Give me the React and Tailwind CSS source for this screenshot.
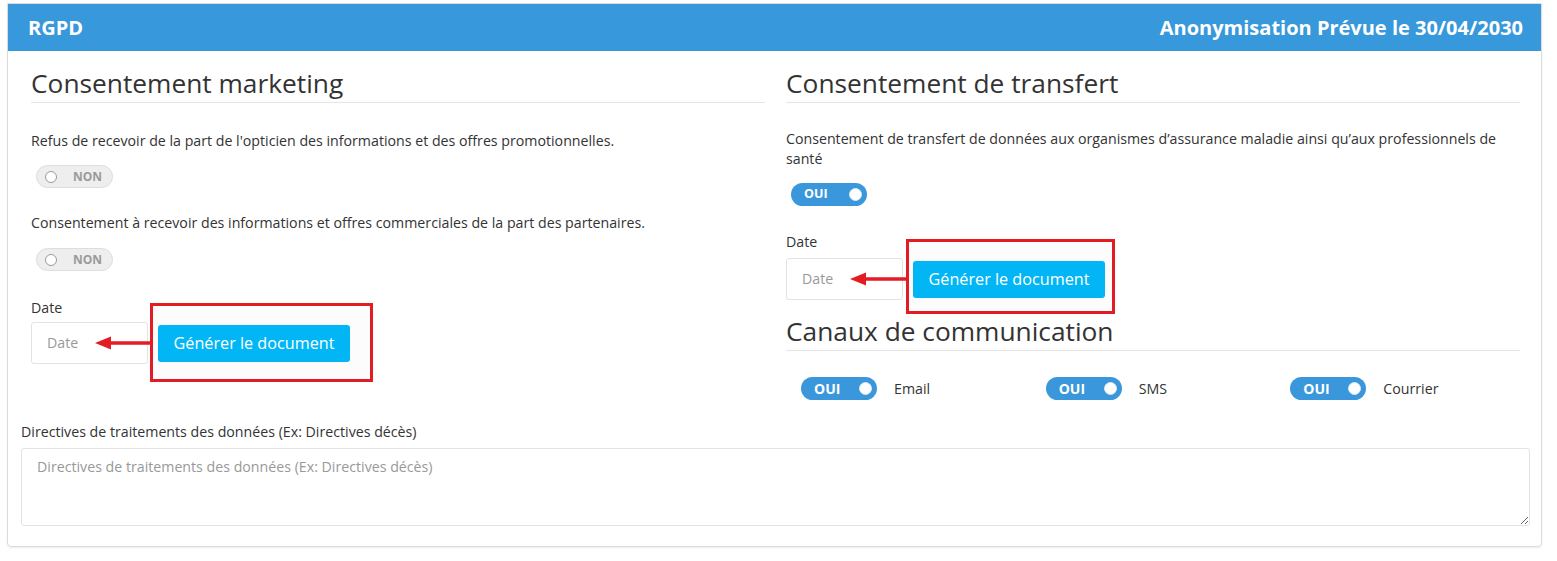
import React from 'react';

const font = { fontFamily: '"Open Sans", "Liberation Sans", sans-serif' };

function Toggle({ on, big }) {
  if (on) {
    return (
      <div className="flex h-[23px] w-[76px] shrink-0 items-center justify-between rounded-full bg-[#3a97db] pl-[13px] pr-[5px]">
        <span className={`${big ? 'text-[14px]' : 'text-[12.5px]'} font-bold leading-none text-white`}>OUI</span>
        <span className="h-[13px] w-[13px] rounded-full border border-[#d8e8f5] bg-white" />
      </div>
    );
  }
  return (
    <div className="flex h-[23px] w-[77px] shrink-0 items-center rounded-full border border-[#dddddd] bg-[#eeeeee] pl-[8px]">
      <span className="h-[12px] w-[12px] rounded-full border border-[#999999] bg-white" />
      <span className="ml-[16px] text-[12px] font-bold leading-none text-[#9a9a9a]">NON</span>
    </div>
  );
}

function Heading({ children, className = '' }) {
  return (
    <h2 className={`border-b border-[#e5e5e5] pb-[5px] text-[26.3px] font-normal leading-[28px] text-[#333] ${className}`}>
      {children}
    </h2>
  );
}

function LeftArrow() {
  return (
    <svg width="56" height="14" viewBox="0 0 56 14" className="pointer-events-none absolute">
      <line x1="12" y1="7" x2="56" y2="7" stroke="#e31b23" strokeWidth="3.5" />
      <polygon points="0,7 16,0.5 16,13.5" fill="#e31b23" />
    </svg>
  );
}

// date field + "Générer" button with its red highlight frame and pointer arrow
function DateRow({ box }) {
  return (
    <div className="relative flex items-center">
      <div className="flex h-[42px] w-[117px] items-center rounded-[3px] border border-[#e3e3e3] bg-white pl-[15px] text-[14.2px] text-[#999]">
        Date
      </div>
      <div className="absolute left-[64px] top-[14px]">
        <LeftArrow />
      </div>
      <div className="relative ml-[10px]">
        <div className={`absolute border-[3px] border-[#e31b23] bg-[#fcfcfc] ${box}`} />
        <button className="relative h-[37px] w-[192px] rounded-[3px] bg-[#02b6f6] text-[16.2px] text-white">
          Générer le document
        </button>
      </div>
    </div>
  );
}

function Channel({ label }) {
  return (
    <div className="flex items-center pl-[15px]">
      <Toggle on big />
      <span className="ml-[17px] text-[14.2px] text-[#333]">{label}</span>
    </div>
  );
}

export default function App() {
  return (
    <div className="min-h-[561px] bg-white pl-[7px] pr-[15px] pt-[3px]" style={font}>
      <div className="overflow-hidden rounded-b-[4px] border border-[#dcdcdc] shadow-[0_1px_2px_rgba(0,0,0,0.08)]">
        <div className="flex h-[47px] items-center justify-between bg-[#3798db] pl-[20px] pr-[18px] text-[20px] font-bold text-white">
          <span>RGPD</span>
          <span>Anonymisation Prévue le 30/04/2030</span>
        </div>

        <div className="flex gap-[21px] pl-[23px] pr-[21px] text-[14.2px] leading-[20px] text-[#333]">
          {/* Consentement marketing */}
          <div className="w-[734px]">
            <Heading className="mt-[18px]">Consentement marketing</Heading>
            <p className="mt-[28px]">
              Refus de recevoir de la part de l'opticien des informations et des offres promotionnelles.
            </p>
            <div className="mt-[14px] pl-[5px]">
              <Toggle />
            </div>
            <p className="mt-[25px]">
              Consentement à recevoir des informations et offres commerciales de la part des partenaires.
            </p>
            <div className="mt-[15px] pl-[5px]">
              <Toggle />
            </div>
            <p className="mt-[27px]">Date</p>
            <div className="mt-[4px]">
              <DateRow box="-left-[8px] -right-[23px] -top-[22px] -bottom-[20px]" />
            </div>
          </div>

          {/* Consentement de transfert + canaux */}
          <div className="w-[734px]">
            <Heading className="mt-[18px]">Consentement de transfert</Heading>
            <p className="mt-[26px]">
              Consentement de transfert de données aux organismes d’assurance maladie ainsi qu’aux professionnels de santé
            </p>
            <div className="mt-[14px] pl-[5px]">
              <Toggle on />
            </div>
            <p className="mt-[26px]">Date</p>
            <div className="mt-[6px]">
              <DateRow box="-left-[7px] -right-[10px] -top-[22px] -bottom-[16px]" />
            </div>
            <Heading className="mt-[17px]">Canaux de communication</Heading>
            <div className="mt-[26px] grid grid-cols-3">
              <Channel label="Email" />
              <Channel label="SMS" />
              <Channel label="Courrier" />
            </div>
          </div>
        </div>

        <div className="pb-[20px] pl-[13px] pr-[11px] pt-[22px]">
          <label className="block text-[14.2px] leading-[20px] text-[#333]">
            Directives de traitements des données (Ex: Directives décès)
          </label>
          <textarea
            className="mt-[6px] block h-[78px] w-full rounded-[3px] border border-[#e3e3e3] px-[15px] py-[8px] text-[14.2px] leading-[20px] text-[#333] placeholder:text-[#999] outline-none"
            placeholder="Directives de traitements des données (Ex: Directives décès)"
            style={font}
          />
        </div>
      </div>
    </div>
  );
}
